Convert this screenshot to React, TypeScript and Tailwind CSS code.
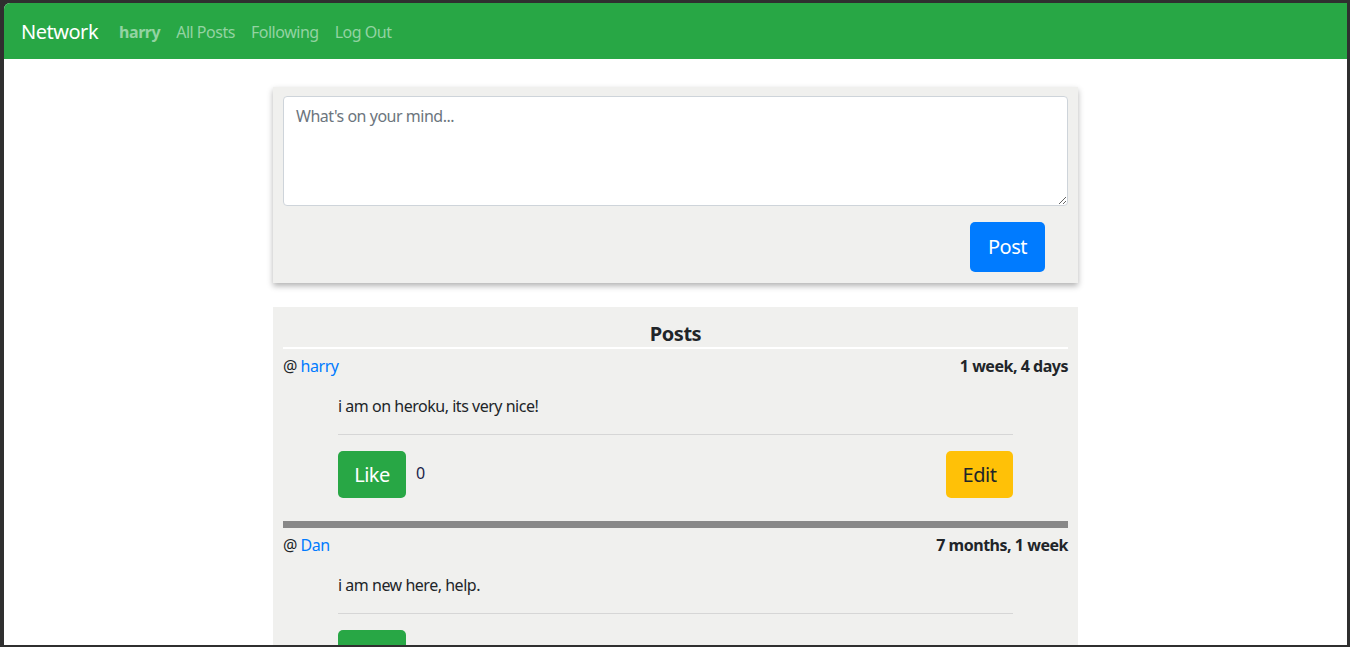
import { useState } from "react";

const font = { fontFamily: '"Noto Sans", "Open Sans", sans-serif' };

type Post = { id: number; user: string; when: string; body: string; likes: number; mine: boolean };

const posts: Post[] = [
  { id: 1, user: "harry", when: "1 week, 4 days", body: "i am on heroku, its very nice!", likes: 0, mine: true },
  { id: 2, user: "Dan", when: "7 months, 1 week", body: "i am new here, help.", likes: 0, mine: false },
];

function PostItem({ p, last }: { p: Post; last: boolean }) {
  return (
    <div>
      <div className="mt-[5px] flex items-center justify-between text-[16px] leading-[24px] text-[#212529]">
        <div>
          @ <a href="#" className="text-[#007bff]">{p.user}</a>
        </div>
        <div className="font-bold">{p.when}</div>
      </div>
      <div className="mx-[55px]">
        <p className="mt-[16px] text-[16px] leading-[24px] text-[#212529]">{p.body}</p>
        <div className="mt-[16px] h-px bg-[#d6d6d6]" />
        <div className="mt-[16px] flex items-start justify-between">
          <div className="flex items-start">
            <button className="h-[47px] w-[68px] rounded-[5px] bg-[#28a745] text-[20px] text-white">Like</button>
            <span className="ml-[10px] mt-[10px] text-[16px] text-[#1b1f4a]">{p.likes}</span>
          </div>
          {p.mine && (
            <button className="h-[47px] w-[67px] rounded-[5px] bg-[#ffc107] text-[20px] text-[#212529]">Edit</button>
          )}
        </div>
      </div>
      {!last && <div className="mt-[23px] h-[7px] bg-[#888888]" />}
    </div>
  );
}

export default function App() {
  const [text, setText] = useState("");
  return (
    <div className="h-[647px] w-[1350px] overflow-hidden bg-[#2f2f2f] pb-[2px] pl-[4px] pr-[3px] pt-[3px] tracking-[-0.03em]" style={font}>
      <div className="h-full overflow-hidden rounded-tl-[6px] bg-white">
        <nav className="flex h-[56px] items-center bg-[#28a745] px-[17px] pt-[1px]">
          <a href="#" className="text-[20px] text-white">Network</a>
          <div className="ml-[21px] flex items-center gap-[16px] text-[16px] text-[#93d3a2]">
            <a href="#" className="font-bold">harry</a>
            <a href="#">All Posts</a>
            <a href="#">Following</a>
            <a href="#">Log Out</a>
          </div>
        </nav>

        <div className="mx-auto w-[805px]">
          <div className="mt-[28px] bg-[#f0f0ee] px-[10px] pb-[11px] pt-[9px] shadow-[0_3px_6px_rgba(0,0,0,0.3)]">
            <textarea
              value={text}
              onChange={(e) => setText(e.target.value)}
              placeholder="What's on your mind..."
              className="block h-[110px] w-full rounded-[4px] border border-[#ced4da] bg-white px-[12px] py-[7px] text-[16px] text-[#495057] placeholder:text-[#6c757d]"
            />
            <div className="mt-[16px] flex justify-end pr-[23px]">
              <button className="h-[50px] w-[75px] rounded-[5px] bg-[#007bff] text-[20px] text-white">Post</button>
            </div>
          </div>

          <div className="mt-[24px] bg-[#f0f0ee] px-[10px] pb-[20px]">
            <h2 className="border-b-2 border-white pt-[13px] text-center text-[20px] font-bold leading-[27px] text-[#212529]">Posts</h2>
            {posts.map((p, i) => (
              <PostItem key={p.id} p={p} last={i === posts.length - 1} />
            ))}
          </div>
        </div>
      </div>
    </div>
  );
}
